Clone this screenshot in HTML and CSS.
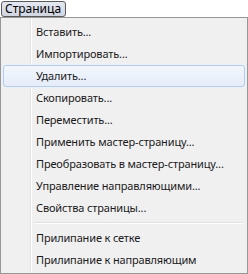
FILE: index.html
```html
<!DOCTYPE html>
<html lang="ru">
<head>
<meta charset="utf-8">
<link rel="stylesheet" href="styles.css">
</head>
<body>
<div class="bar"><span class="title">Страница</span></div>
<div class="menu">
  <div class="item">Вставить...</div>
  <div class="item">Импортировать...</div>
  <div class="item active">Удалить...</div>
  <div class="item">Скопировать...</div>
  <div class="item">Переместить...</div>
  <div class="item">Применить мастер-страницу...</div>
  <div class="item">Преобразовать в мастер-страницу...</div>
  <div class="item">Управление направляющими...</div>
  <div class="item">Свойства страницы...</div>
  <div class="sep"></div>
  <div class="item">Прилипание к сетке</div>
  <div class="item">Прилипание к направляющим</div>
</div>
</body>
</html>
```
FILE: styles.css
```css
html, body {
  margin: 0;
  padding: 0;
  background: #ffffff;
  width: 248px;
  height: 274px;
  overflow: hidden;
  font-family: "Noto Sans", "DejaVu Sans", sans-serif;
  font-size: 12px;
  color: #000;
}
.bar {
  height: 17px;
  padding: 1px 0 0 1px;
  box-sizing: border-box;
  display: flex;
}
.title {
  display: block;
  padding: 0 4px 0 3px;
  border: 1px solid #5a5a5a;
  border-radius: 3px;
  background: linear-gradient(#e4e8f0, #cfd5e2);
  line-height: 14px;
  box-sizing: border-box;
  height: 16px;
}
.menu {
  width: 248px;
  height: 257px;
  box-sizing: border-box;
  border: 1px solid #979797;
  background: linear-gradient(to right, #f0f0f0 0, #f0f0f0 29px, #e2e3e3 29px, #e2e3e3 30px, #ffffff 30px, #ffffff 31px, #f0f0f0 31px);
  padding: 3px 2px;
  display: flex;
  flex-direction: column;
  font-size: 11px;
  letter-spacing: -0.15px;
}
.item {
  height: 22px;
  line-height: 20px;
  padding-left: 32px;
  border: 1px solid transparent;
  border-radius: 3px;
  box-sizing: border-box;
  white-space: nowrap;
  color: #1a1a1a;
}
.item.active {
  border-color: #aecff7;
  background: linear-gradient(#f2f6fc, #e5edf9);
}
.sep {
  height: 2px;
  margin: 3px 2px 3px 31px;
  border-top: 1px solid #e0e0e0;
  border-bottom: 1px solid #ffffff;
  box-sizing: border-box;
}
```
